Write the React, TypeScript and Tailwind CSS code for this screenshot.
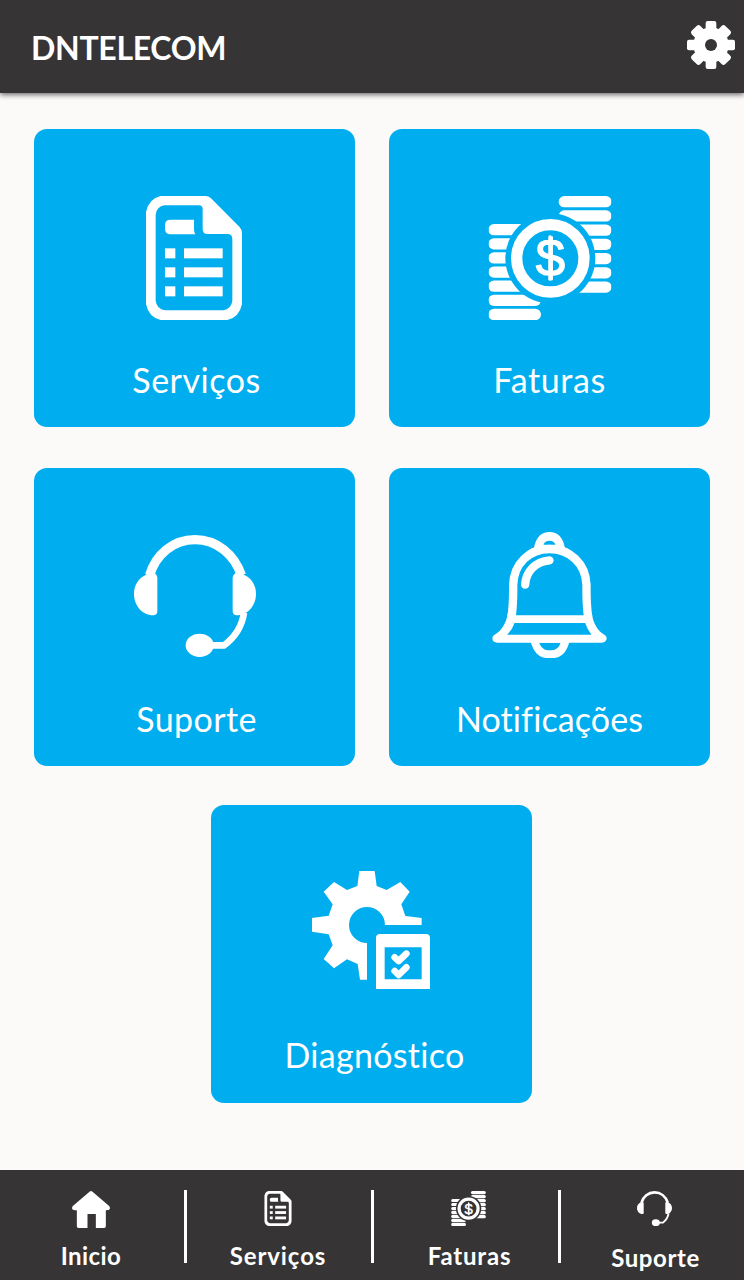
import React, { useId } from 'react';
import clsx from 'clsx';

interface IconProps {
    className?: string;
}

const SettingsIcon: React.FC<IconProps> = ({ className }) => (
    <svg viewBox="69 64 144 144" className={className} fill="currentColor">
        <circle cx="141" cy="136" r="53" />
        {[0, 90].map((angle) => (
            <rect key={angle} x="125" y="64" width="32" height="144" rx="6" transform={`rotate(${angle} 141 136)`} />
        ))}
        {[45, 135].map((angle) => (
            <rect key={angle} x="123" y="65" width="36" height="142" rx="8" transform={`rotate(${angle} 141 136)`} />
        ))}
        <circle cx="141" cy="136" r="18" fill="#363435" />
    </svg>
);

const HomeIcon: React.FC<IconProps> = ({ className }) => (
    <svg viewBox="218 93 113 111" className={className} fill="currentColor">
        <path d="M270 95Q274 91 279 95L329 138Q332 141 331 147Q329 151 319 151V199Q319 204 314 204H289V162H264V204H237Q232 204 232 199V151Q220 151 218 147Q217 141 220 138Z" />
    </svg>
);

const DocumentIcon: React.FC<IconProps> = ({ className }) => (
    <svg viewBox="78 48 288 372" className={className} fill="currentColor">
        <path
            fillRule="evenodd"
            d="M122 48H256Q266 48 273 55L358 140Q366 148 366 160V372Q358 412 322 420H122Q86 412 78 372V96Q86 56 122 48ZM133 76Q110 80 107 104V362Q110 387 135 391H310Q334 387 337 362V177Q337 162 322 162H262Q248 162 248 148V88Q248 76 236 76Z"
        />
        <path d="M152 119H222V148Q222 158 226 163H152Q135 163 135 147V135Q135 119 152 119Z" />
        {[205, 262, 319].map((y) => (
            <g key={y}>
                <rect x="135" y={y} width="31" height="30" />
                <rect x="192" y={y} width="116" height="30" />
            </g>
        ))}
    </svg>
);

const CoinsIcon: React.FC<IconProps> = ({ className }) => {
    const maskId = useId();
    return (
        <svg viewBox="53 48 370 372" className={className} fill="currentColor">
            <mask id={maskId} maskUnits="userSpaceOnUse" x="53" y="48" width="370" height="372">
                <rect x="53" y="48" width="370" height="372" fill="white" />
                <circle cx="239" cy="235" r="135" fill="black" />
            </mask>
            <g mask={`url(#${maskId})`}>
                {[0, 1, 2, 3, 4, 5, 6].map((i) => (
                    <g key={i}>
                        <rect x="264" y={48 + i * 42.7} width="159" height="34" rx="17" />
                        <rect x="53" y={132 + i * 42.4} width="158" height="34" rx="17" />
                    </g>
                ))}
            </g>
            <circle cx="239" cy="235" r="101" fill="none" stroke="currentColor" strokeWidth="34" />
            <text
                x="239"
                y="288"
                textAnchor="middle"
                fontSize="158"
                fontFamily="'Liberation Sans', sans-serif"
                stroke="currentColor"
                strokeWidth="4"
                strokeLinejoin="round"
            >
                $
            </text>
            <rect x="234" y="166" width="9" height="136" rx="4" />
        </svg>
    );
};

const HeadsetIcon: React.FC<IconProps> = ({ className }) => (
    <svg viewBox="42 45 366 366" className={className} fill="currentColor">
        <path d="M89 166C107 103 160 59 225 59S343 103 364 166" fill="none" stroke="currentColor" strokeWidth="28" />
        <path d="M78 164Q90 154 103 159Q112 165 112 172V274Q112 285 100 286C65 286 42 255 42 222C42 195 55 175 78 164Z" />
        <path d="M372 164Q360 154 347 159Q338 165 338 172V274Q338 285 350 286C385 286 408 255 408 222C408 195 395 175 372 164Z" />
        <path d="M372 278C366 318 344 352 312 376H270" fill="none" stroke="currentColor" strokeWidth="20" />
        <ellipse cx="239" cy="376" rx="42" ry="35" />
    </svg>
);

const BellIcon: React.FC<IconProps> = ({ className }) => (
    <svg viewBox="143 36 344 378" className={className} fill="currentColor">
        <path
            fillRule="evenodd"
            d="M268 86C274 52 290 36 315 36S356 52 362 86L315 92ZM297 74H333C329 58 301 58 297 74Z"
        />
        <path
            d="M201 292C207 250 206 225 206 195C208 130 255 87 315 87S424 130 426 195C426 225 425 250 431 292"
            fill="none"
            stroke="currentColor"
            strokeWidth="25"
        />
        <path
            fillRule="evenodd"
            d="M190 278L206 286H426L442 278C445 312 462 334 481 345Q488 350 486 358Q483 368 472 368H158Q146 368 144 358Q142 350 149 345C168 334 186 312 190 278ZM210 309Q204 328 188 344H441Q428 328 422 309Z"
        />
        <path
            fillRule="evenodd"
            d="M258 362C266 396 282 410 304 414H330C352 410 368 396 375 362ZM284 368C290 384 300 391 316 391S344 384 348 368Z"
        />
        <path
            d="M242 194C244 155 272 125 315 121"
            fill="none"
            stroke="currentColor"
            strokeWidth="25"
            strokeLinecap="round"
        />
    </svg>
);

const DiagnosticIcon: React.FC<IconProps> = ({ className }) => (
    <svg viewBox="126 33 354 354" className={className} fill="currentColor">
        <path d="M268 33H314L320 78L350 90L391 66L419 95L394 133L406 168L455 174V195H345A54 54 0 1 0 291 249V359H270L263 312L231 298L192 325L161 297L188 256L176 223L126 215V174L176 167L188 133L161 95L192 66L231 90L262 78Z" />
        <path fillRule="evenodd" d="M330 222H468Q480 222 480 234V387H318V234Q318 222 330 222ZM344 262V358H455V262Z" />
        <path
            d="M374 292L386 303L409 281M374 333L386 345L409 322"
            fill="none"
            stroke="currentColor"
            strokeWidth="20"
            strokeLinecap="round"
            strokeLinejoin="round"
        />
    </svg>
);

interface ItemProps {
    label: string;
    icon: React.ReactNode;
    className?: string;
    labelClass?: string;
}

const Card: React.FC<ItemProps> = ({ label, icon, className, labelClass }) => (
    <button
        className={clsx(
            'flex h-[298px] w-[321px] flex-col items-center justify-between rounded-[13px] bg-[#00aeef] pb-[27px] text-white',
            className
        )}
    >
        {icon}
        <span className={clsx('text-[34px] leading-10 whitespace-nowrap', labelClass)}>{label}</span>
    </button>
);

const NavItem: React.FC<ItemProps> = ({ label, icon, className, labelClass }) => (
    <button className={clsx('flex h-full flex-col items-center pt-[21px]', className)}>
        <span className="flex h-[37px] items-start">{icon}</span>
        <span className={clsx('mt-[14px] text-2xl leading-7 font-bold whitespace-nowrap', labelClass)}>{label}</span>
    </button>
);

const Divider = () => <div className="mt-5 h-[73px] w-[3px] bg-white" />;

const App: React.FC = () => {
    return (
        <div className="flex h-[1280px] w-[744px] flex-col bg-[#fcfaf9] font-['Lato',sans-serif] [font-variant-ligatures:none]">
            {/* Top bar */}
            <header className="flex h-[93px] shrink-0 items-start justify-between bg-[#363435] pr-[9px] pl-[31px] text-white shadow-[0_2px_5px_rgba(0,0,0,0.55)]">
                <h1 className="mt-[28px] text-[32px] leading-10 font-bold tracking-[-0.3px]">DNTELECOM</h1>
                <button className="mt-[21px]">
                    <SettingsIcon className="size-12" />
                </button>
            </header>

            {/* Shortcuts */}
            <main className="flex grow flex-col items-center pt-9">
                <div className="grid grid-cols-2 gap-x-[34px] gap-y-[41px]">
                    <Card
                        label="Serviços"
                        icon={<DocumentIcon className="mt-[67px] mr-px h-[124px] w-24" />}
                        labelClass="ml-1 tracking-[0.5px]"
                    />
                    <Card
                        label="Faturas"
                        icon={<CoinsIcon className="mt-[67px] h-[124px] w-[124px]" />}
                        labelClass="tracking-[0.6px]"
                    />
                    <Card
                        label="Suporte"
                        icon={<HeadsetIcon className="mt-[67px] size-[122px]" />}
                        labelClass="ml-1 tracking-[0.4px]"
                    />
                    <Card
                        label="Notificações"
                        icon={<BellIcon className="mt-16 h-[126px] w-[115px]" />}
                        labelClass="tracking-[0.1px]"
                    />
                </div>
                <Card
                    label="Diagnóstico"
                    icon={<DiagnosticIcon className="mt-[66px] size-[118px]" />}
                    className="mt-[39px] mr-0.5"
                    labelClass="mb-px ml-[7px] tracking-[0.3px]"
                />
            </main>

            {/* Bottom navigation */}
            <nav className="flex h-[110px] shrink-0 bg-[#363435] text-white">
                <NavItem
                    label="Inicio"
                    icon={<HomeIcon className="h-[37px] w-[38px]" />}
                    className="w-[184px] pr-0.5"
                    labelClass="tracking-[0.4px]"
                />
                <Divider />
                <NavItem
                    label="Serviços"
                    icon={<DocumentIcon className="h-[35px] w-7" />}
                    className="w-[184px] pr-0.5"
                    labelClass="tracking-[0.9px]"
                />
                <Divider />
                <NavItem
                    label="Faturas"
                    icon={<CoinsIcon className="size-[35px]" />}
                    className="w-[184px] pl-[5px]"
                    labelClass="ml-0.5 tracking-[0.8px]"
                />
                <Divider />
                <NavItem
                    label="Suporte"
                    icon={<HeadsetIcon className="size-[35px]" />}
                    className="w-[183px] pl-1"
                    labelClass="ml-0.5 pt-0.5 tracking-[0.6px]"
                />
            </nav>
        </div>
    );
};

export default App;
